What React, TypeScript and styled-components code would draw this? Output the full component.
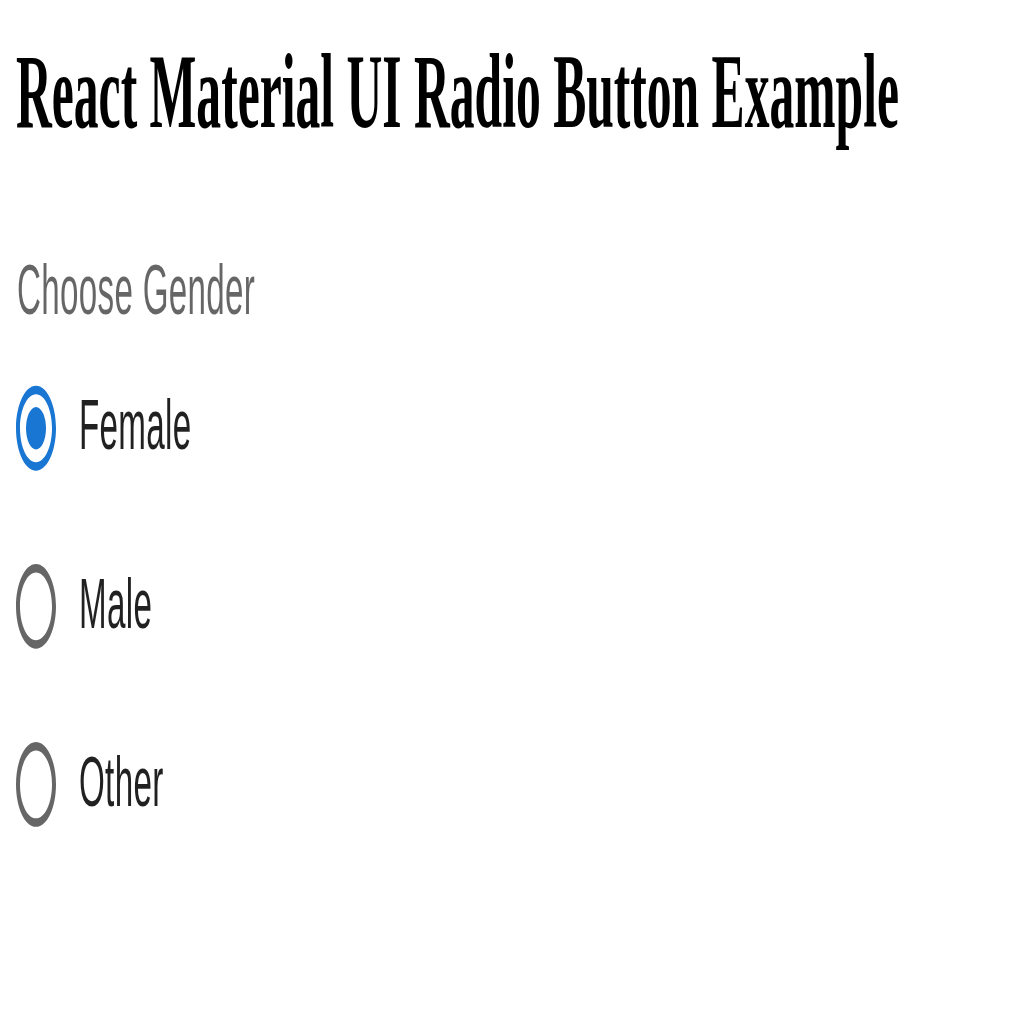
import React from "react";
import styled, { createGlobalStyle } from "styled-components";

const GlobalStyle = createGlobalStyle`
  html, body {
    margin: 0;
    padding: 0;
    background: #ffffff;
  }
`;

const Page = styled.div`
  width: 1024px;
  height: 1024px;
  overflow: hidden;
  background: #ffffff;
`;

const Stage = styled.div`
  width: 512px;
  height: 241.5px;
  transform: scale(2, 4.24);
  transform-origin: 0 0;
  padding: 8px;
  box-sizing: border-box;
`;

const Title = styled.h2`
  margin: 0 0 21px;
  font-family: "Liberation Serif", "Times New Roman", serif;
  font-weight: 700;
  font-size: 24.8px;
  color: #000;
`;

const Fieldset = styled.div`
  display: flex;
  flex-direction: column;
  font-family: "Liberation Sans", Helvetica, Arial, sans-serif;
`;

const Legend = styled.label`
  font-size: 16.6px;
  line-height: 23px;
  letter-spacing: 0.15px;
  color: rgba(0, 0, 0, 0.6);
  padding-left: 0.5px;
`;

const Group = styled.div`
  display: flex;
  flex-direction: column;
`;

const Row = styled.label`
  display: inline-flex;
  align-items: center;
  margin-left: -11px;
  height: 42px;
  cursor: pointer;
`;

const Control = styled.span<{ $checked: boolean }>`
  display: inline-flex;
  padding: 9px;
  color: ${(p) => (p.$checked ? "#1976d2" : "rgba(0, 0, 0, 0.6)")};
  svg {
    width: 24px;
    height: 24px;
    display: block;
  }
`;

const LabelText = styled.span`
  font-size: 16.6px;
  line-height: 24px;
  letter-spacing: 0.15px;
  color: rgba(0, 0, 0, 0.87);
  padding-left: 0.5px;
`;

const RadioIcon = ({ checked }: { checked: boolean }) => (
  <svg viewBox="0 0 24 24" fill="currentColor">
    <path d="M12 2C6.48 2 2 6.48 2 12s4.48 10 10 10 10-4.48 10-10S17.52 2 12 2zm0 18c-4.42 0-8-3.58-8-8s3.58-8 8-8 8 3.58 8 8-3.58 8-8 8z" />
    {checked && <circle cx="12" cy="12" r="5" />}
  </svg>
);

const options = ["Female", "Male", "Other"];

export default function App() {
  const [value, setValue] = React.useState("Female");
  return (
    <Page>
      <GlobalStyle />
      <Stage>
        <Title>React Material UI Radio Button Example</Title>
        <Fieldset>
          <Legend>Choose Gender</Legend>
          <Group role="radiogroup">
            {options.map((o) => (
              <Row key={o} onClick={() => setValue(o)}>
                <Control $checked={value === o}>
                  <RadioIcon checked={value === o} />
                </Control>
                <LabelText>{o}</LabelText>
              </Row>
            ))}
          </Group>
        </Fieldset>
      </Stage>
    </Page>
  );
}
